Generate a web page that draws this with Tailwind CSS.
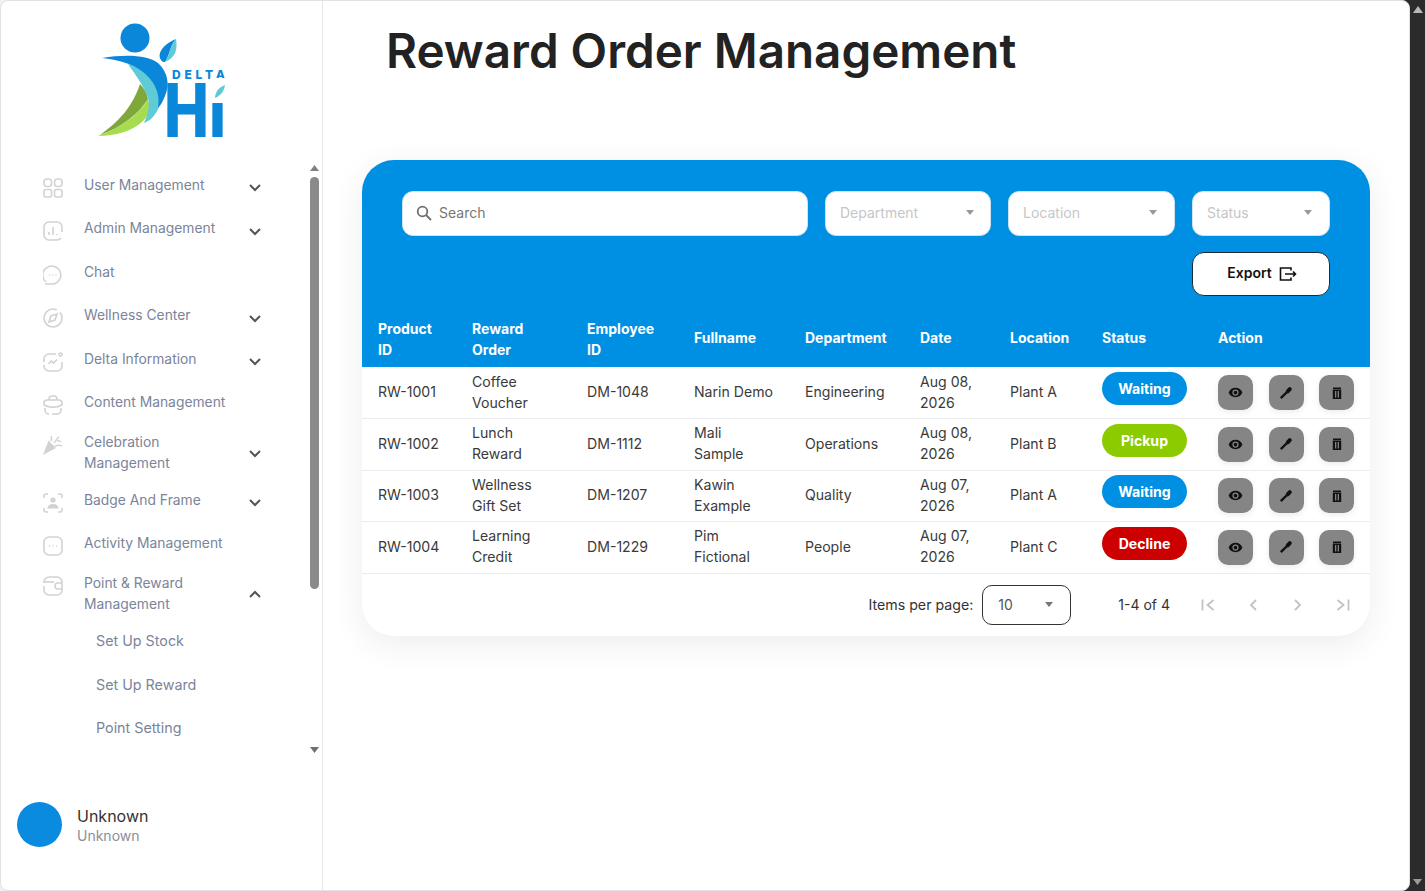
<!DOCTYPE html>
<html lang="en">
<head>
  <meta charset="UTF-8">
  <title>Reward Order Management</title>
  <meta name="viewport" content="width=device-width, initial-scale=1">
  <script src="https://cdn.jsdelivr.net/npm/@tailwindcss/browser@4"></script>
</head>

<body class="h-[891px] overflow-hidden flex bg-[#2b2b2b] font-['Inter',sans-serif] text-[14px]">
  <div class="w-[1410px] h-[891px] flex-none bg-[linear-gradient(to_right,#f1f1f1_50%,#2b2b2b_50%)]">
  <div class="w-[1410px] h-[891px] flex bg-white border border-[#e2e2e2] rounded-[8px] overflow-hidden">

    <!-- sidebar -->
    <aside class="w-[322px] flex-none flex flex-col border-r border-[#e8e8e8]">
      <div class="h-[159px] flex-none pl-[94px] pt-[19px]">
        <svg class="overflow-visible" width="140" height="120" viewBox="95 20 140 120">
          <circle cx="135" cy="38" r="14.5" fill="#0a87d9"/>
          <path d="M176 39C166 43 156 52 161 60C162 62 164 62 165 62C170 55 170 45 176 39Z" fill="#0a87d9"/>
          <path d="M176 39C178 50 175 58 165 62C170 55 170 45 176 39Z" fill="#5fcbd6"/>
          <path d="M98 136C120 128 138 116 148 99C151 108 149 115 143 121C133 131 115 136 98 136Z" fill="#a8dc4f"/>
          <path d="M100 135C118 122 132 108 140 84C144 88 147 93 148 99C138 115 120 128 100 135Z" fill="#7ea83a"/>
          <path d="M128 64C145 68 157 80 161 100L159 107C156 114 152 120 144 123C150 110 150 100 146 93C141 82 135 74 128 64Z" fill="#5fcbd6"/>
          <path d="M102 58C125 54 148 55 158 63C168 72 170 85 165 96C163 101 161 105 158 108C161 92 153 80 143 72C132 63 118 60 102 58Z" fill="#0a87d9"/>
          <text x="172" y="79" font-family="Inter" font-weight="800" font-size="12" fill="#0a87d9" textLength="53" lengthAdjust="spacing">DELTA</text>
          <text x="164" y="137" font-family="Inter" font-weight="800" font-size="74" fill="#0a87d9" textLength="62" lengthAdjust="spacingAndGlyphs">Hi</text>
          <rect x="210" y="78" width="20" height="25" fill="#fff"/>
          <path d="M225 85C224 92 220 96 215 98C215 92 219 87 225 85Z" fill="#5fcbd6"/>
        </svg>
      </div>

      <div class="h-[598px] flex-none flex">
        <nav class="w-[304px] flex-none pt-[5px] text-[13.85px] text-[#7b849a]">
          <a class="flex pl-[42px] h-[43.5px]">
            <svg class="w-[20px] h-[20px] mt-[12.5px] flex-none" viewBox="0 0 20 20" fill="none" stroke="#d2d2d2" stroke-width="1.6"><rect x="1" y="1" width="7.5" height="7.5" rx="3"/><rect x="11.5" y="1" width="7.5" height="7.5" rx="3"/><rect x="1" y="11.5" width="7.5" height="7.5" rx="2"/><rect x="11.5" y="11.5" width="7.5" height="7.5" rx="2"/></svg>
            <span class="w-[164px] ml-[21px] pt-[9.5px] leading-[21px]">User Management</span>
            <svg class="w-[14px] h-[9px] mt-[18px] flex-none" viewBox="0 0 14 9" fill="none" stroke="#555" stroke-width="2"><path d="M2 2l5 5 5-5"/></svg>
          </a>
          <a class="flex pl-[42px] h-[43.5px]">
            <svg class="w-[20px] h-[20px] mt-[12.5px] flex-none" viewBox="0 0 20 20" fill="none" stroke="#d2d2d2" stroke-width="1.6"><path d="M19 11V6a5 5 0 0 0-5-5H6a5 5 0 0 0-5 5v8a5 5 0 0 0 5 5h8a5 5 0 0 0 4-2"/><path d="M6 14v-3M10 14V6M14 14v-1"/></svg>
            <span class="w-[164px] ml-[21px] pt-[9.5px] leading-[21px]">Admin Management</span>
            <svg class="w-[14px] h-[9px] mt-[18px] flex-none" viewBox="0 0 14 9" fill="none" stroke="#555" stroke-width="2"><path d="M2 2l5 5 5-5"/></svg>
          </a>
          <a class="flex pl-[42px] h-[43.5px]">
            <svg class="w-[20px] h-[20px] mt-[12.5px] flex-none" viewBox="0 0 20 20" fill="none" stroke="#d2d2d2" stroke-width="1.6"><path d="M3 17A9 9 0 1 1 10 19H2"/><path d="M6.5 10h1M9.5 10h1M12.5 10h1"/></svg>
            <span class="w-[164px] ml-[21px] pt-[9.5px] leading-[21px]">Chat</span>
          </a>
          <a class="flex pl-[42px] h-[43.5px]">
            <svg class="w-[20px] h-[20px] mt-[12.5px] flex-none" viewBox="0 0 20 20" fill="none" stroke="#d2d2d2" stroke-width="1.6"><circle cx="10" cy="10" r="9" stroke-dasharray="46 4"/><path d="M14 6l-6 2-2 6 6-2z"/></svg>
            <span class="w-[164px] ml-[21px] pt-[9.5px] leading-[21px]">Wellness Center</span>
            <svg class="w-[14px] h-[9px] mt-[18px] flex-none" viewBox="0 0 14 9" fill="none" stroke="#555" stroke-width="2"><path d="M2 2l5 5 5-5"/></svg>
          </a>
          <a class="flex pl-[42px] h-[43.5px]">
            <svg class="w-[20px] h-[20px] mt-[12.5px] flex-none" viewBox="0 0 20 20" fill="none" stroke="#d2d2d2" stroke-width="1.6"><path d="M13 2H6a5 5 0 0 0-5 5v3M1 13v1a5 5 0 0 0 5 5h8a5 5 0 0 0 5-5v-4"/><circle cx="17.5" cy="2.5" r="1.5"/><path d="M5.5 12l3-3 2 2 3.500-3.500"/></svg>
            <span class="w-[164px] ml-[21px] pt-[9.5px] leading-[21px]">Delta Information</span>
            <svg class="w-[14px] h-[9px] mt-[18px] flex-none" viewBox="0 0 14 9" fill="none" stroke="#555" stroke-width="2"><path d="M2 2l5 5 5-5"/></svg>
          </a>
          <a class="flex pl-[42px] h-[43.5px]">
            <svg class="w-[20px] h-[20px] mt-[12.5px] flex-none" viewBox="0 0 20 20" fill="none" stroke="#d2d2d2" stroke-width="1.6"><path d="M6 5V4a3 3 0 0 1 3-3h2a3 3 0 0 1 3 3v1"/><path d="M1 10V8a3 3 0 0 1 3-3h12a3 3 0 0 1 3 3v2c-5 3-13 3-18 0z"/><path d="M2 13v2a4 4 0 0 0 4 4M18 13v2a4 4 0 0 1-4 4H9"/></svg>
            <span class="w-[164px] ml-[21px] pt-[9.5px] leading-[21px]">Content Management</span>
          </a>
          <a class="flex pl-[42px] h-[54px]">
            <svg class="w-[20px] h-[20px] mt-[9px] flex-none" viewBox="0 0 20 20" fill="none" stroke="#d2d2d2" stroke-width="1.4"><path d="M5.500 5.500L13 13 0 20z" fill="#d2d2d2" stroke="none"/><path d="M8 6c1-2 1-3 0-5M11 8c2-2 3-5 5-6M12 11c2-1 4-1 7 0M14 6c2-1 3 0 4 1"/></svg>
            <span class="w-[150px] mr-[14px] ml-[21px] pt-[5.5px] leading-[21px]">Celebration Management</span>
            <svg class="w-[14px] h-[9px] mt-[23px] flex-none" viewBox="0 0 14 9" fill="none" stroke="#555" stroke-width="2"><path d="M2 2l5 5 5-5"/></svg>
          </a>
          <a class="flex pl-[42px] h-[43.5px]">
            <svg class="w-[20px] h-[20px] mt-[12.500px] flex-none" viewBox="0 0 20 20" fill="none" stroke="#d2d2d2" stroke-width="1.6"><path d="M1 5V3a2 2 0 0 1 2-2h2M15 1h2a2 2 0 0 1 2 2v2M1 15v2a2 2 0 0 0 2 2h2M15 19h2a2 2 0 0 0 2-2v-2"/><circle cx="10" cy="7" r="2.600" fill="#d2d2d2" stroke="none"/><path d="M4.500 15.500c0-3 2-4.500 5.500-4.500s5.500 1.500 5.500 4.500z" fill="#d2d2d2" stroke="none"/></svg>
            <span class="w-[164px] ml-[21px] pt-[9.5px] leading-[21px]">Badge And Frame</span>
            <svg class="w-[14px] h-[9px] mt-[18px] flex-none" viewBox="0 0 14 9" fill="none" stroke="#555" stroke-width="2"><path d="M2 2l5 5 5-5"/></svg>
          </a>
          <a class="flex pl-[42px] h-[43.5px]">
            <svg class="w-[20px] h-[20px] mt-[12.5px] flex-none" viewBox="0 0 20 20" fill="none" stroke="#d2d2d2" stroke-width="1.6"><rect x="1" y="1" width="18" height="18" rx="5"/><path d="M6 10h1M9.500 10h1M13 10h1"/></svg>
            <span class="w-[164px] ml-[21px] pt-[9.5px] leading-[21px]">Activity Management</span>
          </a>
          <a class="flex pl-[42px] h-[54px]">
            <svg class="w-[20px] h-[20px] mt-[9px] flex-none" viewBox="0 0 20 20" fill="none" stroke="#d2d2d2" stroke-width="1.6"><path d="M1 7V6a5 5 0 0 1 5-5h8a5 5 0 0 1 5 5v8a5 5 0 0 1-5 5H6a5 5 0 0 1-5-5v-4"/><path d="M1 6h10"/><path d="M19 7h-4a3 3 0 0 0 0 6h4"/></svg>
            <span class="w-[150px] mr-[14px] ml-[21px] pt-[5.5px] leading-[21px]">Point &amp; Reward Management</span>
            <svg class="w-[14px] h-[9px] mt-[23px] flex-none" viewBox="0 0 14 9" fill="none" stroke="#555" stroke-width="2"><path d="M2 7l5-5 5 5"/></svg>
          </a>
          <a class="block pl-[95px] h-[43.5px] pt-[9px] text-[14.3px] leading-[21px]">Set Up Stock</a>
          <a class="block pl-[95px] h-[43.5px] pt-[9px] text-[14.3px] leading-[21px]">Set Up Reward</a>
          <a class="block pl-[95px] h-[43.5px] pt-[9px] text-[14.3px] leading-[21px]">Point Setting</a>
        </nav>

        <div class="flex-1 flex flex-col items-center pt-[5px] pl-[1px]">
          <svg width="9" height="6" viewBox="0 0 9 6"><path d="M4.500 0L9 6H0z" fill="#808080"/></svg>
          <div class="w-[9px] h-[412px] mt-[6px] rounded-full bg-[#8a8a8a]"></div>
          <svg class="mt-[158px]" width="9" height="6" viewBox="0 0 9 6"><path d="M4.500 6L9 0H0z" fill="#707070"/></svg>
        </div>
      </div>

      <div class="flex items-center pl-[16px] pt-[44px] gap-[15px]">
        <div class="w-[45px] h-[45px] rounded-full bg-[#0a8be0]"></div>
        <div class="mt-[1px]">
          <div class="text-[16px] leading-[21px] text-[#333]">Unknown</div>
          <div class="leading-[18px] text-[#8b8f97]">Unknown</div>
        </div>
      </div>
    </aside>

    <!-- main -->
    <main class="flex-1 min-w-0">
      <div class="h-[159px] pl-[63px] pt-[20px]">
        <h1 class="text-[47.6px] leading-[60px] font-semibold text-[#222]">Reward Order Management</h1>
      </div>

      <section class="w-[1008px] ml-[39px] rounded-[32px] bg-white shadow-[0_8px_32px_rgba(40,50,70,0.09)] overflow-hidden">
        <div class="bg-[#0090e3] h-[147px] pt-[31px] px-[40px]">
          <div class="flex gap-[17px]">
            <div class="w-[406px] h-[45px] flex items-center gap-[7px] pl-[13px] pb-[2px] bg-white border border-[#cfe3f2] rounded-[11px] text-[#777]">
              <svg width="16" height="16" viewBox="0 0 16 16" fill="none" stroke="#6f6f6f" stroke-width="1.800"><circle cx="6.500" cy="6.500" r="4.800"/><path d="M10 10l5 5"/></svg>
              <span>Search</span>
            </div>
            <div class="w-[166px] h-[45px] flex items-center justify-between pl-[14px] pr-[16px] pb-[2px] bg-white border border-[#cfe3f2] rounded-[11px] text-[#c6c6c6]">
              <span>Department</span>
              <span class="w-0 h-0 border-x-[4.5px] border-x-transparent border-t-[5px] border-t-[#9a9a9a]"></span>
            </div>
            <div class="w-[167px] h-[45px] flex items-center justify-between pl-[14px] pr-[17px] pb-[2px] bg-white border border-[#cfe3f2] rounded-[11px] text-[#c6c6c6]">
              <span>Location</span>
              <span class="w-0 h-0 border-x-[4.5px] border-x-transparent border-t-[5px] border-t-[#9a9a9a]"></span>
            </div>
            <div class="w-[138px] h-[45px] flex items-center justify-between pl-[14px] pr-[17px] pb-[2px] bg-white border border-[#cfe3f2] rounded-[11px] text-[#c6c6c6]">
              <span>Status</span>
              <span class="w-0 h-0 border-x-[4.5px] border-x-transparent border-t-[5px] border-t-[#9a9a9a]"></span>
            </div>
          </div>
          <div class="flex justify-end mt-[16px]">
            <button class="w-[138px] h-[44px] flex items-center justify-center gap-[7px] pl-[2px] bg-white border border-[#1c2b3a] rounded-[12px] font-semibold text-[#111]">
              <span class="-mt-[3px]">Export</span>
              <svg width="18" height="14" viewBox="0 0 18 14" fill="none" stroke="#111" stroke-width="1.600"><path d="M12 3.500V1H1.500v12H12v-2.500"/><path d="M6 7h10.500M14 4.500L16.500 7 14 9.500"/></svg>
            </button>
          </div>
        </div>

        <table class="w-full table-fixed border-collapse">
          <colgroup>
            <col class="w-[110px]"><col class="w-[115px]"><col class="w-[107px]"><col class="w-[111px]"><col class="w-[115px]"><col class="w-[90px]"><col class="w-[92px]"><col class="w-[116px]"><col>
          </colgroup>
          <thead class="bg-[#0090e3] text-white text-left">
            <tr class="h-[60px]">
              <th class="pl-[16px] pr-[30px] pt-[4px] font-bold leading-[21px]">Product ID</th>
              <th class="pr-[40px] pt-[4px] font-bold leading-[21px]">Reward Order</th>
              <th class="pr-[30px] pt-[4px] font-bold leading-[21px]">Employee ID</th>
              <th class="font-bold leading-[21px]">Fullname</th>
              <th class="font-bold leading-[21px]">Department</th>
              <th class="font-bold leading-[21px]">Date</th>
              <th class="font-bold leading-[21px]">Location</th>
              <th class="font-bold leading-[21px]">Status</th>
              <th class="font-bold leading-[21px]">Action</th>
            </tr>
          </thead>
          <tbody id="rows" class="text-[14.1px] text-[#3a3a3a]"></tbody>
        </table>

        <div class="h-[62px] flex items-center pr-[20px] text-[#333]">
          <span class="ml-auto text-[14.2px]">Items per page:</span>
          <div class="w-[89px] h-[40px] ml-[9px] flex items-center justify-between pl-[15px] pr-[17px] border border-[#333] rounded-[10px] text-[#555]">
            <span>10</span>
            <span class="w-0 h-0 border-x-[4.5px] border-x-transparent border-t-[5px] border-t-[#777]"></span>
          </div>
          <span class="ml-[47px] mr-[31px]">1-4 of 4</span>
          <div class="flex gap-[31px]">
            <svg width="14" height="14" viewBox="0 0 14 14" fill="none" stroke="#c2c2c2" stroke-width="1.800"><path d="M1.500 1.500v11M12.500 2l-6 5 6 5"/></svg>
            <svg width="14" height="14" viewBox="0 0 14 14" fill="none" stroke="#c2c2c2" stroke-width="1.800"><path d="M10 2L5 7l5 5"/></svg>
            <svg width="14" height="14" viewBox="0 0 14 14" fill="none" stroke="#c2c2c2" stroke-width="1.800"><path d="M4 2l5 5-5 5"/></svg>
            <svg width="14" height="14" viewBox="0 0 14 14" fill="none" stroke="#c2c2c2" stroke-width="1.800"><path d="M12.500 1.500v11M1.500 2l6 5-6 5"/></svg>
          </div>
        </div>
      </section>
    </main>
  </div>
  </div>

  <!-- window scrollbar -->
  <div class="flex-1 flex flex-col justify-between items-center py-[6px]">
    <svg width="10" height="7" viewBox="0 0 10 7"><path d="M5 0l5 7H0z" fill="#b8b8b8"/></svg>
    <svg width="9" height="6" viewBox="0 0 9 6"><path d="M4.500 6L9 0H0z" fill="#9a9a9a"/></svg>
  </div>

  <script>
    const statusClass = {
      Waiting: "bg-[#0090e3]",
      Pickup: "bg-[#8ccb00]",
      Decline: "bg-[#cc0000]"
    };

    const orders = [
      ["RW-1001", "Coffee Voucher", "DM-1048", "Narin Demo", "Engineering", "Aug 08, 2026", "Plant A", "Waiting"],
      ["RW-1002", "Lunch Reward", "DM-1112", "Mali<br>Sample", "Operations", "Aug 08, 2026", "Plant B", "Pickup"],
      ["RW-1003", "Wellness Gift Set", "DM-1207", "Kawin Example", "Quality", "Aug 07, 2026", "Plant A", "Waiting"],
      ["RW-1004", "Learning Credit", "DM-1229", "Pim Fictional", "People", "Aug 07, 2026", "Plant C", "Decline"]
    ];

    const eye = `<svg width="15" height="15" viewBox="0 0 24 24" fill="#111"><path d="M12 4.500C7 4.500 2.700 7.600 1 12c1.700 4.400 6 7.500 11 7.500s9.300-3.100 11-7.500c-1.700-4.400-6-7.500-11-7.500zM12 17a5 5 0 1 1 0-10 5 5 0 0 1 0 10zm0-8a3 3 0 1 0 0 6 3 3 0 0 0 0-6z"/></svg>`;
    const pen = `<svg width="14" height="14" viewBox="0 0 14 14" fill="none" stroke="#111"><path d="M1.800 12.200L7.500 6.500" stroke-width="2.400"/><path d="M8.700 5.300L10.800 3.200" stroke-width="4" stroke-linecap="round"/></svg>`;
    const trash = `<svg width="14" height="14" viewBox="0 0 14 14" fill="#111"><path d="M3 1.500h8V3H3zM2.800 3.500h8.400V13H2.800zM5 5v6.500h1.300V5zM7.700 5v6.500H9V5z" fill-rule="evenodd"/></svg>`;

    const btn = icon => `<span class="w-[35px] h-[35px] flex items-center justify-center rounded-[10px] bg-[#858585] shadow-[0_2px_6px_rgba(0,0,0,0.08)]">${icon}</span>`;

    document.getElementById("rows").innerHTML = orders.map(o => `
      <tr class="h-[51.5px] border-b border-[#ebecef] leading-[21px]">
        <td class="pl-[16px] pb-[2px]">${o[0]}</td>
        <td class="pr-[40px] pb-[2px]">${o[1]}</td>
        <td class="pb-[2px]">${o[2]}</td>
        <td class="pr-[30px] pb-[2px]">${o[3]}</td>
        <td class="pb-[2px]">${o[4]}</td>
        <td class="pr-[20px] pb-[2px]">${o[5]}</td>
        <td class="pb-[2px]">${o[6]}</td>
        <td><span class="w-[85px] h-[33px] mb-[8px] flex items-center justify-center rounded-full font-bold text-white ${statusClass[o[7]]}">${o[7]}</span></td>
        <td><div class="flex gap-[15.5px]">${btn(eye)}${btn(pen)}${btn(trash)}</div></td>
      </tr>`).join("");
  </script>
</body>
</html>
